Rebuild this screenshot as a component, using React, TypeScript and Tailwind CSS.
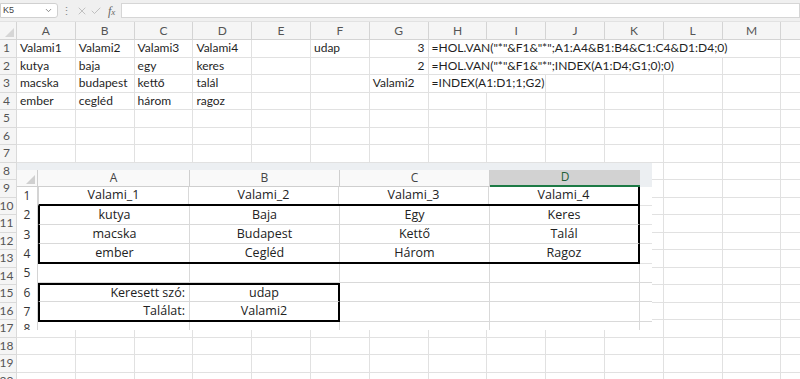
import React from 'react'
import { Check, ChevronDown, X } from 'lucide-react'

type Cell = { col: number; text: string; align?: 'left' | 'right'; span?: number }

const COLS = ['A', 'B', 'C', 'D', 'E', 'F', 'G', 'H', 'I', 'J', 'K', 'L', 'M']

const sheet: Record<number, Cell[]> = {
  1: [
    { col: 0, text: 'Valami1' },
    { col: 1, text: 'Valami2' },
    { col: 2, text: 'Valami3' },
    { col: 3, text: 'Valami4' },
    { col: 5, text: 'udap' },
    { col: 6, text: '3', align: 'right' },
    { col: 7, text: '=HOL.VAN("*"&F1&"*";A1:A4&B1:B4&C1:C4&D1:D4;0)', span: 6 },
  ],
  2: [
    { col: 0, text: 'kutya' },
    { col: 1, text: 'baja' },
    { col: 2, text: 'egy' },
    { col: 3, text: 'keres' },
    { col: 6, text: '2', align: 'right' },
    { col: 7, text: '=HOL.VAN("*"&F1&"*";INDEX(A1:D4;G1;0);0)', span: 5 },
  ],
  3: [
    { col: 0, text: 'macska' },
    { col: 1, text: 'budapest' },
    { col: 2, text: 'kettő' },
    { col: 3, text: 'talál' },
    { col: 6, text: 'Valami2' },
    { col: 7, text: '=INDEX(A1:D1;1;G2)', span: 2 },
  ],
  4: [
    { col: 0, text: 'ember' },
    { col: 1, text: 'cegléd' },
    { col: 2, text: 'három' },
    { col: 3, text: 'ragoz' },
  ],
}

const SheetRow: React.FC<{ n: number }> = ({ n }) => {
  const cells = sheet[n] ?? []
  const out: React.ReactNode[] = []
  for (let c = 0; c < COLS.length; c++) {
    const cell = cells.find((x) => x.col === c)
    const span = cell?.span ?? 1
    out.push(
      <div
        key={c}
        style={{ width: span * 58.8 }}
        className={`shrink-0 h-full border-r border-b border-[#e1e1e1] px-[3px] flex items-center whitespace-nowrap overflow-visible ${
          cell?.align === 'right' ? 'justify-end' : ''
        }`}
      >
        {cell?.text}
      </div>
    )
    c += span - 1
  }
  return (
    <div className="flex h-[17.5px] text-[12px] text-[#1f1f1f]">
      <div className="w-[17px] shrink-0 h-full bg-[#f5f5f5] border-r border-b border-[#dadada] text-[#555] text-[12px] flex items-center justify-center pr-[3px]">
        {n}
      </div>
      {out}
      <div className="flex-1 h-full border-b border-[#e1e1e1]" />
    </div>
  )
}

const OCell: React.FC<{ w: string; children?: React.ReactNode; last?: boolean; right?: boolean }> = ({ w, children, last, right }) => (
  <div
    className={`${w} shrink-0 h-full flex items-center ${right ? 'justify-end pr-[4px]' : 'justify-center'} ${
      last ? '' : 'border-r border-[#d9d9d9]'
    }`}
  >
    {children}
  </div>
)

const tableRows = [
  ['Valami_1', 'Valami_2', 'Valami_3', 'Valami_4'],
  ['kutya', 'Baja', 'Egy', 'Keres'],
  ['macska', 'Budapest', 'Kettő', 'Talál'],
  ['ember', 'Cegléd', 'Három', 'Ragoz'],
]

const ORowHead: React.FC<{ n: number | string }> = ({ n }) => (
  <div className="w-[21px] shrink-0 h-full border-r border-[#d4d4d4] flex items-center justify-center text-[#333] text-[12px]">
    {n}
  </div>
)

const Overlay: React.FC = () => {
  const widths = ['w-[152px]', 'w-[150px]', 'w-[150px]', 'w-[150px]']
  return (
    <div className="absolute left-[17px] top-[163px] w-[635px] h-[167px] bg-white overflow-hidden font-['Open_Sans',sans-serif] text-[12.5px] text-[#222] flex flex-col">
      <div className="h-[7px] shrink-0 bg-[#eceff2]" />
      <div className="flex h-[16.5px] shrink-0 bg-[#f9f9f9] text-[12px] text-[#444]">
        <div className="w-[21px] shrink-0 h-full border-r border-b border-[#cfcfcf] relative">
          <svg className="absolute right-[2px] bottom-[2px]" width="9" height="9" viewBox="0 0 9 9">
            <polygon points="9,0 9,9 0,9" fill="#d0d0d0" />
          </svg>
        </div>
        {['A', 'B', 'C'].map((l, i) => (
          <div key={l} className={`${widths[i]} shrink-0 h-full border-r border-b border-[#cfcfcf] flex items-center justify-center`}>
            {l}
          </div>
        ))}
        <div className="w-[150px] shrink-0 h-full bg-[#d2d2d2] border-b-2 border-[#1d7a45] flex items-center justify-center text-[#1e5f38]">
          D
        </div>
        <div className="flex-1 h-full bg-[#eceff2]" />
      </div>
      {tableRows.map((r, i) => (
        <div key={i} className="flex h-[19.3px] shrink-0">
          <ORowHead n={i + 1} />
          <div
            className={`flex w-[602px] shrink-0 h-full border-r-2 border-r-black ${i === 0 ? 'border-l border-l-[#d4d4d4]' : 'border-l-2 border-l-black'} ${
              i === 0 || i === 3 ? 'border-b-2 border-b-black' : 'border-b border-b-[#d9d9d9]'
            }`}
          >
            {r.map((t, j) => (
              <OCell key={j} w={j === 3 ? 'flex-1' : 'w-[150px]'} last={j === 3}>
                {t}
              </OCell>
            ))}
          </div>
          <div className="flex-1 h-full border-b border-[#e3e3e3]" />
        </div>
      ))}
      <div className="flex h-[19.3px] shrink-0">
        <ORowHead n={5} />
        <div className="flex flex-1 h-full border-b border-[#d9d9d9]">
          <OCell w="w-[152px]" />
          <OCell w="w-[150px]" />
          <OCell w="w-[150px]" />
          <OCell w="w-[150px]" />
        </div>
      </div>
      {[
        ['Keresett szó:', 'udap'],
        ['Találat:', 'Valami2'],
      ].map((r, i) => (
        <div key={i} className="flex h-[19.3px] shrink-0">
          <ORowHead n={i + 6} />
          <div
            className={`flex w-[302px] shrink-0 h-full border-x-2 border-black ${
              i === 0 ? 'border-t-2 border-b border-b-[#d9d9d9]' : 'border-b-2'
            }`}
          >
            <OCell w="w-[150px]" right>
              {r[0]}
            </OCell>
            <OCell w="flex-1" last>
              {r[1]}
            </OCell>
          </div>
          <div className="flex flex-1 h-full border-b border-[#d9d9d9]">
            <OCell w="w-[150px]" />
            <OCell w="w-[150px]" />
          </div>
        </div>
      ))}
      <div className="flex flex-1">
        <div className="w-[21px] shrink-0 h-full border-r border-[#d4d4d4] flex justify-center text-[#333] text-[12px] leading-[14px]">
          8
        </div>
        <OCell w="w-[152px]" />
        <OCell w="w-[150px]" />
        <OCell w="w-[150px]" />
        <OCell w="w-[150px]" />
      </div>
    </div>
  )
}

const App: React.FC = () => {
  return (
    <div className="relative w-[800px] h-[379px] overflow-hidden bg-white font-['Lato',sans-serif]">
      {/* formula bar */}
      <div className="h-[22px] bg-[#f0f0f0] flex items-center border-b border-[#e2e2e2]">
        <div className="w-[58px] h-[15px] bg-white border border-[#d0d0d0] rounded-r-[3px] flex items-center justify-between pl-[2px] pr-[4px]">
          <span className="text-[9px] text-[#444] font-['Liberation_Sans',sans-serif]">K5</span>
          <ChevronDown className="w-[9px] h-[9px] text-[#666]" strokeWidth={2} />
        </div>
        <span className="ml-[3px] text-[#888] text-[11px] leading-none">⋮</span>
        <div className="ml-[4px] flex items-center gap-[2px] text-[#b0b0b0]">
          <X className="w-[12px] h-[12px]" strokeWidth={1.5} />
          <Check className="w-[12px] h-[12px]" strokeWidth={1.5} />
          <span className="ml-[4px] italic font-['Liberation_Serif',serif] text-[12px] text-[#666] leading-none">
            f<span className="text-[9px]">x</span>
          </span>
        </div>
        <div className="ml-[6px] flex-1 h-[15px] bg-white border border-[#d6d6d6]" />
      </div>
      {/* column headers */}
      <div className="flex h-[18px] bg-[#f5f5f5] text-[12px] text-[#555]">
        <div className="w-[17px] shrink-0 h-full border-r border-b border-[#d4d4d4] relative">
          <svg className="absolute right-[2px] bottom-[2px]" width="9" height="9" viewBox="0 0 9 9">
            <polygon points="9,0 9,9 0,9" fill="#d6d6d6" />
          </svg>
        </div>
        {COLS.map((c) => (
          <div key={c} className="w-[58.8px] shrink-0 h-full border-r border-b border-[#d4d4d4] flex items-center justify-center">
            {c}
          </div>
        ))}
        <div className="flex-1 h-full border-b border-[#d4d4d4]" />
      </div>
      {Array.from({ length: 20 }, (_, i) => (
        <SheetRow key={i} n={i + 1} />
      ))}
      <Overlay />
    </div>
  )
}

export default App
